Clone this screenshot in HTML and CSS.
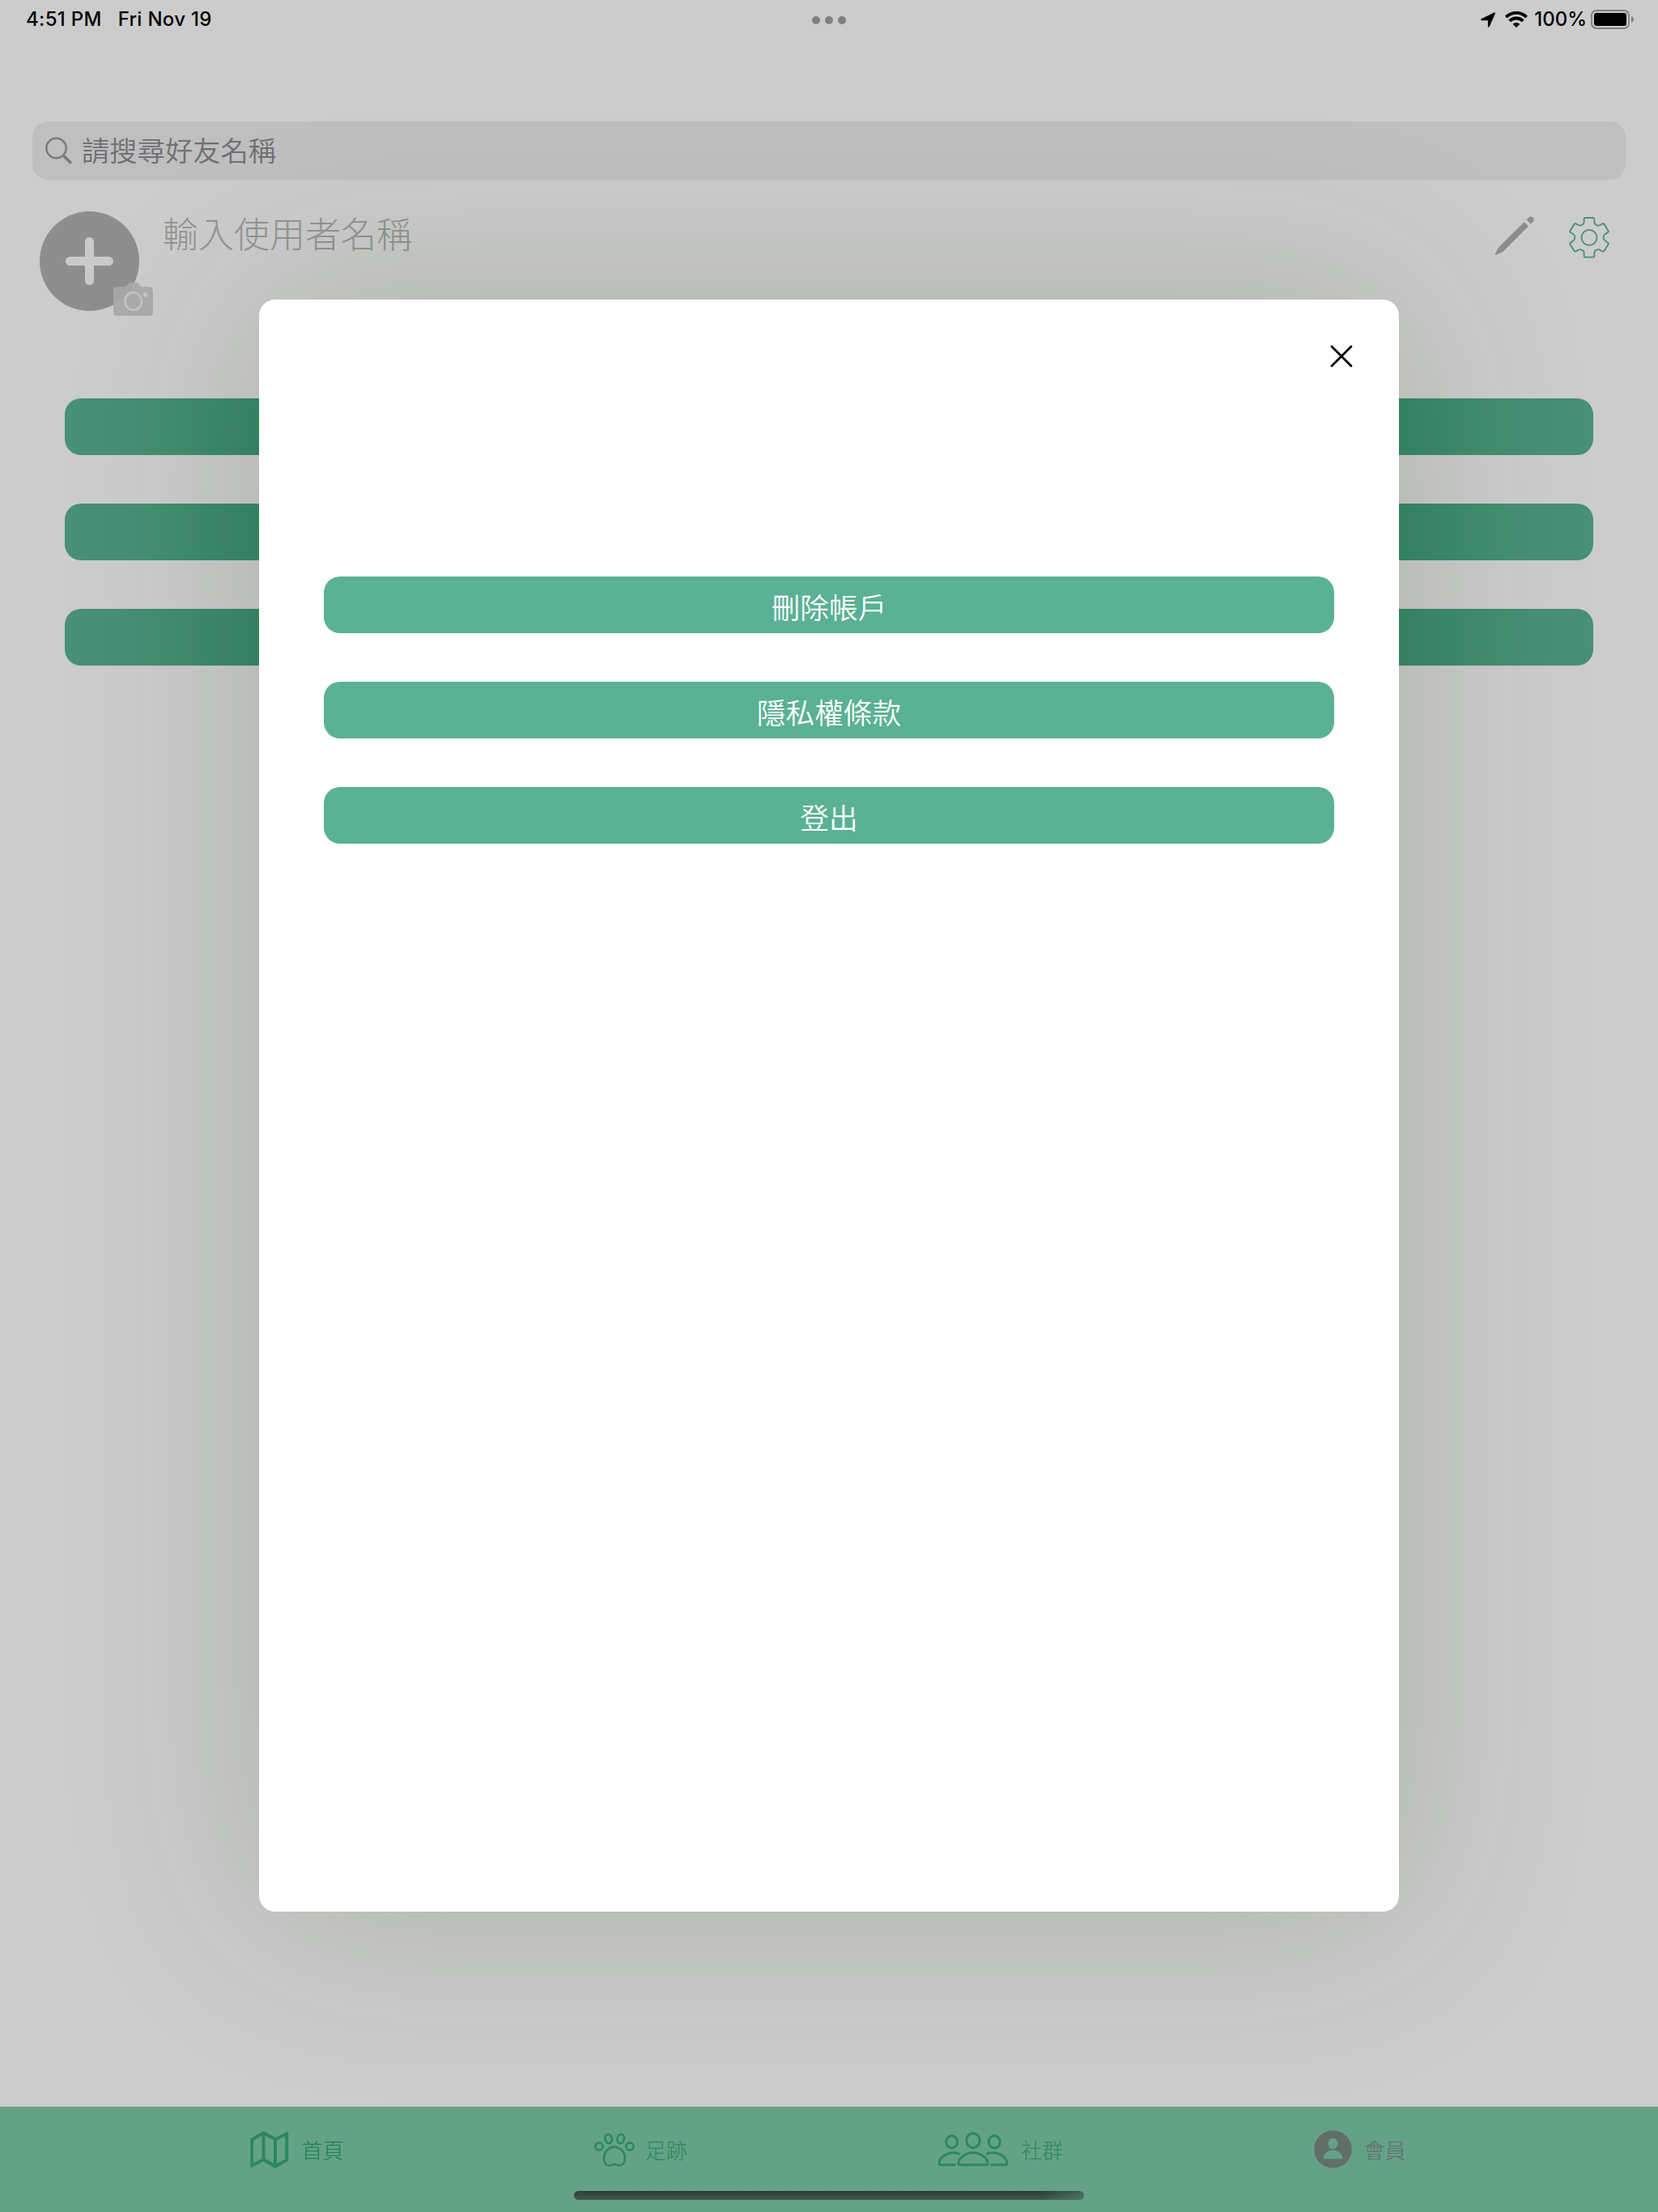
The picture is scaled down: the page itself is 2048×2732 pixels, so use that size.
FILE: index.html
```html
<!DOCTYPE html>
<html lang="zh-Hant">
<head>
<meta charset="utf-8">
<title>會員</title>
<link rel="stylesheet" href="styles.css">
</head>
<body>
<div class="screen">
  <header class="status">
    <div class="status-left"><span class="time">4:51 PM</span><span class="date">Fri Nov 19</span></div>
    <div class="dots"><i></i><i></i><i></i></div>
    <div class="status-right">
      <svg class="loc" viewBox="0 0 18 19"><path d="M17.600.6c.4.2.5.6.3 1.100L10.800 17.800c-.5 1.100-1.900.8-1.900-.3V10.200H1.200C0 10.200-.3 8.800.8 8.300L16.700.6c.4-.2.600-.2.900 0z"/></svg>
      <svg class="wifi" viewBox="0 0 28 20"><g fill="none" stroke="#000" stroke-width="3.800"><path d="M1.300 7.200a18 18 0 0 1 25.400 0"/><path d="M5.700 11.900a11.800 11.800 0 0 1 16.600 0"/></g><path d="M14 20l-4.400-4.200a6.300 6.300 0 0 1 8.800 0z"/></svg>
      <span class="pct">100%</span>
      <svg class="battery" viewBox="0 0 54 24"><rect x="1" y="1" width="46" height="22" rx="6" fill="none" stroke="#7f7f7f" stroke-width="1.800"/><rect x="4" y="4" width="40" height="16" rx="3"/><path d="M50 8c4 1.500 4 6.500 0 8z" fill="#7f7f7f"/></svg>
    </div>
  </header>

  <div class="search">
    <svg class="lens" viewBox="0 0 33 34"><circle cx="13.500" cy="14" r="12.200" fill="none" stroke="#7b7b7b" stroke-width="2.500"/><path d="M22.500 23.300l8.300 8.300" stroke="#7b7b7b" stroke-width="3.600" stroke-linecap="round"/></svg>
    <span>請搜尋好友名稱</span>
  </div>

  <section class="profile">
    <div class="avatar">
      <svg class="plus" viewBox="0 0 60 60"><path d="M29.500 5.500v48M5.500 29.500h48" stroke="#cacaca" stroke-width="11" stroke-linecap="round"/></svg>
      <svg class="camera" viewBox="0 0 147 123"><path d="M16 16h26c6 0 12-16 22-16h22c10 0 12 16 22 16h23q16 0 16 16v75q0 16-16 16H16q-16 0-16-16V32q0-16 16-16z" fill="#a9a9a9" fill-opacity=".93"/><ellipse cx="74" cy="69" rx="31" ry="33" fill="none" stroke="#c7c7c7" stroke-width="7"/><circle cx="118" cy="45" r="8" fill="#c7c7c7"/></svg>
    </div>
    <span class="name">輸入使用者名稱</span>
    <svg class="pencil" viewBox="0 0 150 150"><path d="M110 25l16 15-95 95-26 11q-4 1-2-4l12-23zM119 16l9-9c9-8 24 4 16 15l-10 10z" fill="#8d8d8c"/></svg>
    <svg class="gear" viewBox="0 0 150 158"><g fill="none" stroke="#4a8e75" stroke-width="5.500" stroke-linejoin="round"><path d="M59 6h32q3 0 3 5v11q0 7 8 11 7 3 13 0l9-5q5-2 7 2l14 23q3 5-1 7l-10 7q-6 4-6 12t6 12l10 7q4 2 1 7l-14 23q-2 4-7 2l-9-5q-6-3-13 0-8 4-8 11v11q0 5-3 5H59q-3 0-3-5v-11q0-7-8-11-7-3-13 0l-9 5q-5 2-7-2L5 105q-3-5 1-7l10-7q6-4 6-12t-6-12L6 60q-4-2-1-7l14-23q2-4 7-2l9 5q6 3 13 0 8-4 8-11V11q0-5 3-5z"/><circle cx="75" cy="79" r="28.500"/></g></svg>
  </section>

  <div class="back-list"><div class="bar"></div><div class="bar"></div><div class="bar"></div></div>

  <nav class="tabs">
    <div class="tab">
      <svg width="48" height="46" viewBox="0 0 48 46"><path d="M2.200 10.500L16.500 2.200 31 10.200 45.200 3.200v32.500L31 43.700 16.500 35.300 2.200 42.700zM16.500 2.200v33M31 10.200v33.500" fill="none" stroke="#2d875f" stroke-width="4" stroke-linejoin="round"/></svg>
      <span class="home">首頁</span>
    </div>
    <div class="tab paw">
      <svg width="50" height="42" viewBox="0 0 150 124"><g fill="none" stroke="#2d875f" stroke-width="8"><ellipse cx="18" cy="50" rx="14" ry="14"/><ellipse cx="132" cy="50" rx="14" ry="14"/><ellipse cx="53" cy="22" rx="12.500" ry="17" transform="rotate(-12 53 22)"/><ellipse cx="98" cy="22" rx="12.500" ry="17" transform="rotate(12 98 22)"/><path d="M75 52c-20 0-39 18-39 42 0 17 9 27 22 27 7 0 9-5 17-5s10 5 17 5c13 0 22-10 22-27 0-24-19-42-39-42z"/></g></svg>
      <span>足跡</span>
    </div>
    <div class="tab">
      <svg width="88" height="43" viewBox="0 0 264 129"><g fill="none" stroke="#2d875f" stroke-width="9"><ellipse cx="132" cy="32" rx="24.500" ry="27"/><ellipse cx="53" cy="37" rx="21" ry="23"/><ellipse cx="211" cy="37" rx="21" ry="23"/><path d="M132 77c-32 0-54 24-54 39q0 6 7 6h94q7 0 7-6c0-15-22-39-54-39zM83 82c-44-16-76 14-77 34q0 6 6 6h56M181 82c44-16 76 14 77 34q0 6-6 6h-56"/></g></svg>
      <span>社群</span>
    </div>
    <div class="tab member">
      <svg width="47" height="47" viewBox="0 0 47 47"><circle cx="23.500" cy="23.500" r="23.300" fill="#616f67"/><ellipse cx="23.500" cy="16.500" rx="6" ry="6.700" fill="#64a287"/><path d="M11.500 35.500c0-6 5-11 12-11s12 5 12 11z" fill="#64a287"/></svg>
      <span>會員</span>
    </div>
  </nav>
  <div class="home-indicator"></div>

  <main class="modal">
    <svg class="close" viewBox="0 0 28 28"><path d="M2 2l24 24M26 2L2 26" stroke="#000" stroke-width="2.800" stroke-linecap="round"/></svg>
    <div class="actions">
      <div class="action">刪除帳戶</div>
      <div class="action">隱私權條款</div>
      <div class="action">登出</div>
    </div>
  </main>
</div>
</body>
</html>
```
FILE: styles.css
```css
* { box-sizing: border-box; }
body {
  margin: 0;
  font-family: "Inter", "Noto Sans CJK TC", sans-serif;
}
svg { display: block; flex: none; overflow: visible; }
.screen {
  position: relative;
  width: 2048px;
  height: 2732px;
  overflow: hidden;
  background: #cccccc;
  display: flex;
  flex-direction: column;
}
.status {
  height: 48px;
  padding: 0 30px 0 32px;
  display: grid;
  grid-template-columns: 1fr auto 1fr;
  align-items: center;
  font-size: 24px;
  font-weight: 500;
  line-height: 48px;
  color: #000;
}
.status-left { display: flex; gap: 20px; letter-spacing: .3px; }
.dots { display: flex; gap: 6px; padding-top: 2px; margin-left: -2px; }
.dots i { width: 10px; height: 10px; border-radius: 50%; background: #808080; }
.status-right { display: flex; align-items: center; justify-content: flex-end; margin-right: -1px; }
.loc { width: 18px; height: 19px; margin-right: 12px; }
.wifi { width: 28px; height: 20px; margin-right: 8px; }
.pct { margin-right: 5px; }
.battery { width: 54px; height: 24px; }

.search {
  height: 72px;
  margin: 102px 40px 0;
  padding-left: 16px;
  border-radius: 20px;
  background: #bfbfbf;
  display: flex;
  align-items: center;
  gap: 12px;
  font-size: 34.300px;
  font-weight: 350;
  line-height: 68px;
  color: #707074;
}
.search span { height: 72px; }
.lens { width: 33px; height: 34px; }
.search span, .name, .tab span, .action { font-family: "Noto Sans CJK TC", sans-serif; white-space: nowrap; }

.profile {
  height: 270px;
  padding: 39px 60px 0 49px;
  display: flex;
  align-items: flex-start;
}
.avatar {
  position: relative;
  width: 123px;
  height: 123px;
  border-radius: 50%;
  background: #8e8e8e;
  display: grid;
  place-items: center;
}
.plus { width: 60px; height: 60px; }
.camera { position: absolute; left: 91px; top: 88px; width: 49px; height: 41px; }
.name {
  margin-left: 29px;
  font-size: 44px;
  font-weight: 300;
  line-height: 53px;
  color: #939593;
}
.pencil { width: 50px; height: 50px; margin: 5px 42px 0 auto; }
.gear { width: 50px; height: 52.700px; margin-top: 6px; }

.back-list { padding: 0 80px; display: grid; gap: 60px; }
.bar {
  height: 70px;
  border-radius: 20px;
  background: linear-gradient(90deg, #489079 0, #469076 70px, #418d70 150px, #38886a 240px, #38886a 1648px, #418d70 1738px, #469076 1818px, #489079 100%);
}

.tabs {
  height: 130px;
  margin-top: auto;
  padding: 0 2px 25px 0;
  background: #64a287;
  display: flex;
  align-items: center;
  justify-content: space-evenly;
  position: relative;
  z-index: 2;
}
.tab {
  display: flex;
  align-items: center;
  gap: 15px;
  font-size: 26px;
  line-height: 36px;
  font-weight: 300;
  color: #2d875f;
}
.tab .home { color: #1c8155; }
.paw { gap: 13px; }
.member { color: #616f67; }
.home-indicator {
  position: absolute;
  z-index: 3;
  left: 709px;
  top: 2706px;
  width: 630px;
  height: 11px;
  border-radius: 6px;
  background: linear-gradient(90deg, transparent 92%, rgba(100, 162, 135, .4)), linear-gradient(#2b3f36, #40594e);
}

.modal {
  position: absolute;
  left: 320px;
  top: 370px;
  width: 1408px;
  height: 1991px;
  border-radius: 20px;
  background: #fff;
  box-shadow: 0 0 240px rgba(18, 44, 8, .18);
  padding: 56px 57px 0 80px;
}
.close { width: 28px; height: 28px; margin-left: auto; }
.actions { margin: 258px 23px 0 0; display: grid; gap: 60px; }
.action {
  height: 70px;
  border-radius: 20px;
  background: #5ab193;
  color: #fff;
  text-align: center;
  font-size: 35.700px;
  font-weight: 350;
  line-height: 73px;
}
```
